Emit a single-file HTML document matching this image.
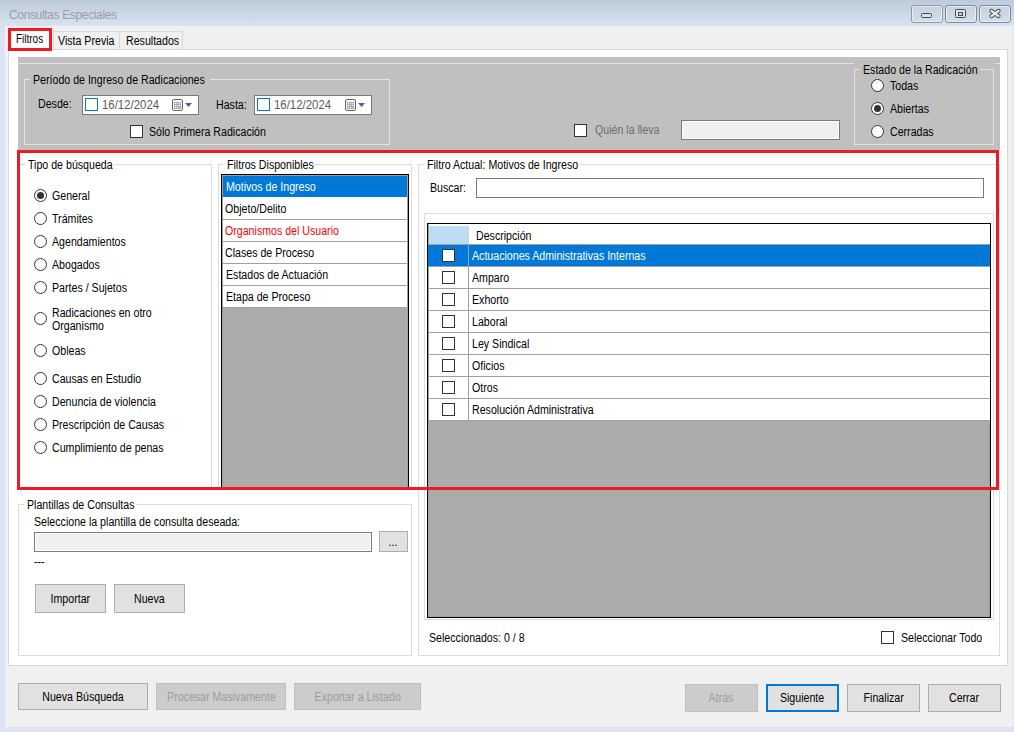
<!DOCTYPE html>
<html><head><meta charset="utf-8">
<style>
*{margin:0;padding:0;box-sizing:border-box}
html,body{width:1014px;height:732px;overflow:hidden;background:#DAE5F1;font-family:"Liberation Sans",sans-serif}
.a{position:absolute}
.t{position:absolute;font-size:12px;line-height:13px;transform:scaleX(0.885);transform-origin:0 0;white-space:nowrap;color:#000}
.bx{position:absolute;border:1px solid #DCDCDC}
.rad{position:absolute;width:13px;height:13px;border:1px solid #333;border-radius:50%;background:#fff}
.rad.on::after{content:"";position:absolute;left:2px;top:2px;width:7px;height:7px;border-radius:50%;background:#333}
.chk{position:absolute;width:13px;height:13px;border:1px solid #333;background:#fff}
.btn{position:absolute;border:1px solid #ADADAD;background:#E1E1E1;font-size:12px;text-align:center;color:#000;white-space:nowrap}
.btn.dis{border-color:#BFBFBF;background:#CCCCCC;color:#9C9C9C}
.gl{position:absolute;background:#DCDCDC}
.btn span{display:inline-block;transform:scaleX(0.885)}
</style></head><body>
<!-- title bar -->
<div class="a" style="left:0;top:0;width:1014px;height:26px;background:linear-gradient(#BCCBDA,#D8E3EF)"></div>
<div class="a" style="left:9px;top:7px;font-size:12px;line-height:16px;letter-spacing:-0.35px;color:#9C9BA5;white-space:nowrap">Consultas Especiales</div>
<!-- caption buttons -->
<div class="a" style="left:911px;top:5px;width:32px;height:18px;border:1px solid #8C97A8;border-radius:3px;background:linear-gradient(#C5D2E0,#D3DEEA);box-shadow:inset 0 0 0 1px #E6EDF5"></div>
<div class="a" style="left:945px;top:5px;width:32px;height:18px;border:1px solid #7C88A0;border-radius:3px;background:linear-gradient(#C5D2E0,#D3DEEA);box-shadow:inset 0 0 0 1px #E6EDF5"></div>
<div class="a" style="left:979px;top:5px;width:32px;height:18px;border:1px solid #7C88A0;border-radius:3px;background:linear-gradient(#C5D2E0,#D3DEEA);box-shadow:inset 0 0 0 1px #E6EDF5"></div>
<div class="a" style="left:921px;top:13px;width:11px;height:5px;border:1px solid #4A4A4A;border-radius:1.5px;background:#DEDEDE"></div>
<div class="a" style="left:955px;top:9px;width:11px;height:9px;border:1px solid #4A4A4A;border-radius:1.5px;background:#E2E2E2"></div>
<div class="a" style="left:958px;top:12px;width:5px;height:4px;border:1px solid #4A4A4A;background:#C8D2DE"></div>
<svg class="a" style="left:988px;top:8px" width="14" height="11" viewBox="0 0 14 11"><path d="M3.5 3 L10.5 8 M10.5 3 L3.5 8" stroke="#4A4A4A" stroke-width="4.2" stroke-linecap="round"/><path d="M3.5 3 L10.5 8 M10.5 3 L3.5 8" stroke="#EDEDED" stroke-width="2.2" stroke-linecap="round"/></svg>
<!-- client -->
<div class="a" style="left:5px;top:26px;width:1008px;height:701px;background:#F0F0F0"></div>
<!-- tabs -->
<div class="a" style="left:53px;top:31px;width:67px;height:19px;border:1px solid #D9D9D9;background:#F0F0F0"></div>
<div class="a" style="left:119px;top:31px;width:64px;height:19px;border:1px solid #D9D9D9;background:#F0F0F0"></div>
<div class="t" style="left:58px;top:35px">Vista Previa</div>
<div class="t" style="left:126px;top:35px">Resultados</div>
<!-- tab page -->
<div class="a" style="left:8px;top:49px;width:1000px;height:617px;border:1px solid #D9D9D9;background:#fff"></div>
<!-- selected tab -->
<div class="a" style="left:8px;top:28px;width:44px;height:23px;background:#fff"></div>
<div class="t" style="left:16px;top:33px;transform:scaleX(0.83)">Filtros</div>
<div class="a" style="left:8px;top:28px;width:44px;height:23px;border:3px solid #ED1C24"></div>

<!-- gray top panel -->
<div class="a" style="left:18px;top:57px;width:982px;height:93px;background:#C0C0C0"></div>
<div class="a" style="left:19px;top:63px;width:835px;height:1px;background:#E3E3E3"></div><div class="a" style="left:995px;top:63px;width:5px;height:1px;background:#E3E3E3"></div>
<!-- Periodo group -->
<div class="bx" style="left:24px;top:79px;width:366px;height:66px;border-color:#E3E3E3"></div>
<div class="a" style="left:30px;top:74px;width:180px;height:13px;background:#C0C0C0"></div>
<div class="t" style="left:33px;top:74px">Período de Ingreso de Radicaciones</div>
<div class="t" style="left:38px;top:98px">Desde:</div>
<div class="a" style="left:82px;top:95px;width:117px;height:20px;border:1px solid #7A7A7A;background:#fff"></div>
<div class="a" style="left:85px;top:98px;width:13px;height:13px;border:1px solid #0078D7;background:#fff"></div>
<div class="t" style="left:102px;top:99px;color:#5A5A5A;transform:scaleX(0.95)">16/12/2024</div><svg class="a" style="left:172px;top:98px" width="22" height="15" viewBox="0 0 22 15"><rect x="0.5" y="1.5" width="10" height="11" rx="1.5" fill="#F4F7FB" stroke="#6E6360"/><rect x="2" y="4" width="7" height="7" fill="#A9AFBA"/><g fill="#fff"><rect x="3" y="5" width="1" height="1"/><rect x="5" y="5" width="1" height="1"/><rect x="7" y="5" width="1" height="1"/><rect x="3" y="7" width="1" height="1"/><rect x="5" y="7" width="1" height="1"/><rect x="7" y="7" width="1" height="1"/><rect x="3" y="9" width="1" height="1"/><rect x="5" y="9" width="1" height="1"/></g><path d="M13 5 H20 L16.5 9 Z" fill="#4A6490"/></svg>
<div class="t" style="left:216px;top:99px">Hasta:</div>
<div class="a" style="left:254px;top:95px;width:118px;height:20px;border:1px solid #7A7A7A;background:#fff"></div>
<div class="a" style="left:257px;top:98px;width:13px;height:13px;border:1px solid #0078D7;background:#fff"></div>
<div class="t" style="left:274px;top:99px;color:#5A5A5A;transform:scaleX(0.95)">16/12/2024</div><svg class="a" style="left:345px;top:98px" width="22" height="15" viewBox="0 0 22 15"><rect x="0.5" y="1.5" width="10" height="11" rx="1.5" fill="#F4F7FB" stroke="#6E6360"/><rect x="2" y="4" width="7" height="7" fill="#A9AFBA"/><g fill="#fff"><rect x="3" y="5" width="1" height="1"/><rect x="5" y="5" width="1" height="1"/><rect x="7" y="5" width="1" height="1"/><rect x="3" y="7" width="1" height="1"/><rect x="5" y="7" width="1" height="1"/><rect x="7" y="7" width="1" height="1"/><rect x="3" y="9" width="1" height="1"/><rect x="5" y="9" width="1" height="1"/></g><path d="M13 5 H20 L16.5 9 Z" fill="#4A6490"/></svg>
<div class="chk" style="left:130px;top:125px"></div>
<div class="t" style="left:149px;top:126px">Sólo Primera Radicación</div>
<div class="chk" style="left:574px;top:124px"></div>
<div class="t" style="left:595px;top:124px;color:#6D6D6D">Quién la lleva</div>
<div class="a" style="left:681px;top:120px;width:159px;height:20px;border:1px solid #7A7A7A;background:#F0F0F0;box-shadow:inset 0 0 0 1px #fff"></div>
<!-- Estado group -->
<div class="bx" style="left:854px;top:69px;width:140px;height:76px;border-color:#E3E3E3"></div>
<div class="a" style="left:860px;top:63px;width:120px;height:13px;background:#C0C0C0"></div>
<div class="t" style="left:863px;top:64px">Estado de la Radicación</div>
<div class="rad" style="left:871px;top:79px"></div><div class="t" style="left:890px;top:80px">Todas</div>
<div class="rad on" style="left:871px;top:102px"></div><div class="t" style="left:890px;top:103px">Abiertas</div>
<div class="rad" style="left:871px;top:125px"></div><div class="t" style="left:890px;top:126px">Cerradas</div>

<!-- Tipo de busqueda -->
<div class="bx" style="left:18px;top:164px;width:194px;height:326px"></div>
<div class="a" style="left:25px;top:158px;width:89px;height:13px;background:#fff"></div>
<div class="t" style="left:28px;top:159px">Tipo de búsqueda</div>
<div class="rad on" style="left:34px;top:189px"></div><div class="t" style="left:52px;top:190px">General</div>
<div class="rad" style="left:34px;top:212px"></div><div class="t" style="left:52px;top:213px">Trámites</div>
<div class="rad" style="left:34px;top:235px"></div><div class="t" style="left:52px;top:236px">Agendamientos</div>
<div class="rad" style="left:34px;top:258px"></div><div class="t" style="left:52px;top:259px">Abogados</div>
<div class="rad" style="left:34px;top:281px"></div><div class="t" style="left:52px;top:282px">Partes / Sujetos</div>
<div class="rad" style="left:34px;top:312px"></div><div class="t" style="left:52px;top:307px">Radicaciones en otro</div><div class="t" style="left:52px;top:320px">Organismo</div>
<div class="rad" style="left:34px;top:344px"></div><div class="t" style="left:52px;top:345px">Obleas</div>
<div class="rad" style="left:34px;top:372px"></div><div class="t" style="left:52px;top:373px">Causas en Estudio</div>
<div class="rad" style="left:34px;top:395px"></div><div class="t" style="left:52px;top:396px">Denuncia de violencia</div>
<div class="rad" style="left:34px;top:418px"></div><div class="t" style="left:52px;top:419px">Prescripción de Causas</div>
<div class="rad" style="left:34px;top:441px"></div><div class="t" style="left:52px;top:442px">Cumplimiento de penas</div>

<!-- Filtros Disponibles -->
<div class="bx" style="left:218px;top:164px;width:194px;height:326px"></div>
<div class="a" style="left:223px;top:158px;width:90px;height:13px;background:#fff"></div>
<div class="t" style="left:227px;top:159px">Filtros Disponibles</div>
<div class="a" style="left:221px;top:174px;width:188px;height:316px;border:1px solid #000;background:#ABABAB;box-shadow:inset 0 0 0 1px #A0A0A0"></div>
<div class="a" style="left:223px;top:176px;width:184px;height:132px;background:#fff"></div>
<div class="a" style="left:223px;top:176px;width:184px;height:21px;background:#0078D7"></div>
<div class="gl" style="left:222px;top:219px;width:186px;height:1px;background:#A0A0A0"></div>
<div class="gl" style="left:222px;top:241px;width:186px;height:1px;background:#A0A0A0"></div>
<div class="gl" style="left:222px;top:263px;width:186px;height:1px;background:#A0A0A0"></div>
<div class="gl" style="left:222px;top:285px;width:186px;height:1px;background:#A0A0A0"></div>
<div class="gl" style="left:222px;top:307px;width:186px;height:1px;background:#A0A0A0"></div>
<div class="t" style="left:226px;top:181px;color:#fff">Motivos de Ingreso</div>
<div class="t" style="left:225px;top:203px">Objeto/Delito</div>
<div class="t" style="left:225px;top:225px;color:#FF0000">Organismos del Usuario</div>
<div class="t" style="left:225px;top:247px">Clases de Proceso</div>
<div class="t" style="left:226px;top:269px">Estados de Actuación</div>
<div class="t" style="left:226px;top:291px">Etapa de Proceso</div>

<!-- Filtro Actual -->
<div class="bx" style="left:418px;top:164px;width:582px;height:492px"></div>
<div class="a" style="left:424px;top:158px;width:156px;height:13px;background:#fff"></div>
<div class="t" style="left:427px;top:159px">Filtro Actual: Motivos de Ingreso</div>
<div class="t" style="left:430px;top:182px">Buscar:</div>
<div class="a" style="left:476px;top:178px;width:508px;height:20px;border:1px solid #7A7A7A;background:#fff"></div>
<div class="bx" style="left:424px;top:213px;width:570px;height:407px"></div>
<div class="a" style="left:427px;top:223px;width:564px;height:395px;border:1px solid #000;background:#ABABAB;box-shadow:inset 0 0 0 1px #A0A0A0"></div>
<div class="a" style="left:429px;top:224px;width:561px;height:197px;background:#fff"></div>
<div class="a" style="left:429px;top:226px;width:40px;height:18px;background:#BCDCF4"></div>
<div class="t" style="left:476px;top:230px">Descripción</div>
<div class="a" style="left:428px;top:245px;width:562px;height:21px;background:#0078D7"></div>
<div class="gl" style="left:428px;top:244px;width:562px;height:1px;background:#A0A0A0"></div>
<div class="gl" style="left:468px;top:245px;width:1px;height:176px;background:#A0A0A0"></div>
<div class="gl" style="left:428px;top:266px;width:562px;height:1px;background:#A0A0A0"></div>
<div class="chk" style="left:442px;top:249px"></div>
<div class="t" style="left:472px;top:250px;color:#fff">Actuaciones Administrativas Internas</div>
<div class="gl" style="left:428px;top:288px;width:562px;height:1px;background:#A0A0A0"></div>
<div class="chk" style="left:442px;top:271px"></div>
<div class="t" style="left:472px;top:272px;color:#000">Amparo</div>
<div class="gl" style="left:428px;top:310px;width:562px;height:1px;background:#A0A0A0"></div>
<div class="chk" style="left:442px;top:293px"></div>
<div class="t" style="left:472px;top:294px;color:#000">Exhorto</div>
<div class="gl" style="left:428px;top:332px;width:562px;height:1px;background:#A0A0A0"></div>
<div class="chk" style="left:442px;top:315px"></div>
<div class="t" style="left:472px;top:316px;color:#000">Laboral</div>
<div class="gl" style="left:428px;top:354px;width:562px;height:1px;background:#A0A0A0"></div>
<div class="chk" style="left:442px;top:337px"></div>
<div class="t" style="left:472px;top:338px;color:#000">Ley Sindical</div>
<div class="gl" style="left:428px;top:376px;width:562px;height:1px;background:#A0A0A0"></div>
<div class="chk" style="left:442px;top:359px"></div>
<div class="t" style="left:472px;top:360px;color:#000">Oficios</div>
<div class="gl" style="left:428px;top:398px;width:562px;height:1px;background:#A0A0A0"></div>
<div class="chk" style="left:442px;top:381px"></div>
<div class="t" style="left:472px;top:382px;color:#000">Otros</div>
<div class="gl" style="left:428px;top:420px;width:562px;height:1px;background:#A0A0A0"></div>
<div class="chk" style="left:442px;top:403px"></div>
<div class="t" style="left:472px;top:404px;color:#000">Resolución Administrativa</div>
<div class="t" style="left:429px;top:632px">Seleccionados: 0 / 8</div>
<div class="chk" style="left:881px;top:631px"></div>
<div class="t" style="left:901px;top:632px">Seleccionar Todo</div>

<!-- Plantillas -->
<div class="bx" style="left:18px;top:504px;width:394px;height:152px"></div>
<div class="a" style="left:24px;top:498px;width:112px;height:13px;background:#fff"></div>
<div class="t" style="left:27px;top:499px">Plantillas de Consultas</div>
<div class="t" style="left:34px;top:516px">Seleccione la plantilla de consulta deseada:</div>
<div class="a" style="left:34px;top:532px;width:338px;height:20px;border:1px solid #7A7A7A;background:#F0F0F0;box-shadow:inset 0 0 0 1px #fff"></div>
<div class="btn" style="left:379px;top:531px;width:29px;height:21px;line-height:21px"><span>...</span></div>
<div class="t" style="left:34px;top:556px">---</div>
<div class="btn" style="left:35px;top:584px;width:71px;height:29px;line-height:29px"><span>Importar</span></div>
<div class="btn" style="left:114px;top:584px;width:71px;height:29px;line-height:29px"><span>Nueva</span></div>

<!-- red annotation -->
<div class="a" style="left:17px;top:150px;width:982px;height:340px;border:3px solid #ED1C24"></div>
<!-- bottom buttons -->
<div class="btn" style="left:18px;top:683px;width:130px;height:27px;line-height:27px"><span>Nueva Búsqueda</span></div>
<div class="btn dis" style="left:156px;top:683px;width:130px;height:27px;line-height:27px"><span>Procesar Masivamente</span></div>
<div class="btn dis" style="left:294px;top:683px;width:127px;height:27px;line-height:27px"><span>Exportar a Listado</span></div>
<div class="btn dis" style="left:685px;top:684px;width:73px;height:28px;line-height:27px"><span>Atrás</span></div>
<div class="btn" style="left:766px;top:684px;width:73px;height:28px;line-height:25px;border:2px solid #0078D7"><span>Siguiente</span></div>
<div class="btn" style="left:847px;top:684px;width:73px;height:28px;line-height:27px"><span>Finalizar</span></div>
<div class="btn" style="left:928px;top:684px;width:73px;height:28px;line-height:27px"><span>Cerrar</span></div>
</body></html>
